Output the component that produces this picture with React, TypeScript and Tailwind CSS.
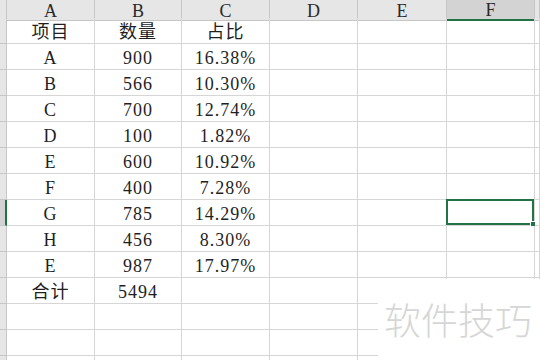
import React from 'react';

const columns = ['A', 'B', 'C', 'D', 'E', 'F', 'G'];

const rows: string[][] = [
  ['项目', '数量', '占比'],
  ['A', '900', '16.38%'],
  ['B', '566', '10.30%'],
  ['C', '700', '12.74%'],
  ['D', '100', '1.82%'],
  ['E', '600', '10.92%'],
  ['F', '400', '7.28%'],
  ['G', '785', '14.29%'],
  ['H', '456', '8.30%'],
  ['E', '987', '17.97%'],
  ['合计', '5494', ''],
  ['', '', ''],
  ['', '', ''],
  ['', '', ''],
];

// active cell is F8 (row index 7, column index 5)
const ACTIVE_ROW = 7;
const ACTIVE_COL = 5;

const gridCols = 'grid grid-cols-[7px_88px_87px_88px_88px_89px_88px_1fr]';

const App = () => {
  return (
    <div
      className="relative w-[540px] h-[360px] overflow-hidden bg-white text-[#1f1f1f]"
      style={{ fontFamily: '"Liberation Serif", "Noto Sans CJK SC", serif' }}
    >
      {/* Column headers */}
      <div className={`${gridCols} h-[18px]`}>
        <div className="bg-[#e6e6e6] border-r border-b border-[#c6c6c6]" />
        {columns.map((col, i) => (
          <div
            key={col}
            className={
              i === ACTIVE_COL
                ? 'bg-[#d3d3d3] border-r border-[#c6c6c6] border-b-2 border-b-[#217346] flex items-center justify-center text-[18px] leading-none text-[#2a2a2a] pt-[1px]'
                : 'bg-[#e6e6e6] border-r border-b border-[#c6c6c6] flex items-center justify-center text-[18px] leading-none text-[#2a2a2a] pt-[1px]'
            }
          >
            {i < 6 ? col : ''}
          </div>
        ))}
      </div>

      {/* Data rows */}
      {rows.map((row, r) => (
        <div key={r} className={`${gridCols} h-[26px]`}>
          <div
            className={
              r === ACTIVE_ROW
                ? 'bg-[#d3d3d3] border-b border-[#c6c6c6] border-r-2 border-r-[#217346]'
                : 'bg-[#e6e6e6] border-r border-b border-[#c6c6c6]'
            }
          />
          {columns.map((col, c) => (
            <div
              key={col}
              className="relative border-r border-b border-[#d6d6d6] flex items-center justify-center pt-[3px] text-[18px] tracking-[1px] leading-none"
            >
              {c < 3 ? row[c] : ''}
              {r === ACTIVE_ROW && c === ACTIVE_COL && (
                <div className="absolute -left-[1px] -top-[1px] right-0 bottom-0 border-2 border-[#217346]">
                  <div className="absolute -right-[4px] -bottom-[4px] w-[6px] h-[6px] bg-[#217346] border border-white" />
                </div>
              )}
            </div>
          ))}
        </div>
      ))}

      {/* Watermark */}
      <div className="absolute left-[378px] top-[279px] right-0 bottom-0 bg-white flex items-center justify-center">
        <span
          className="text-[37px] font-light leading-none text-[#d6d6d6] pr-[2px]"
          style={{ fontFamily: '"Noto Sans CJK SC", sans-serif' }}
        >
          软件技巧
        </span>
      </div>
    </div>
  );
};

export default App;
